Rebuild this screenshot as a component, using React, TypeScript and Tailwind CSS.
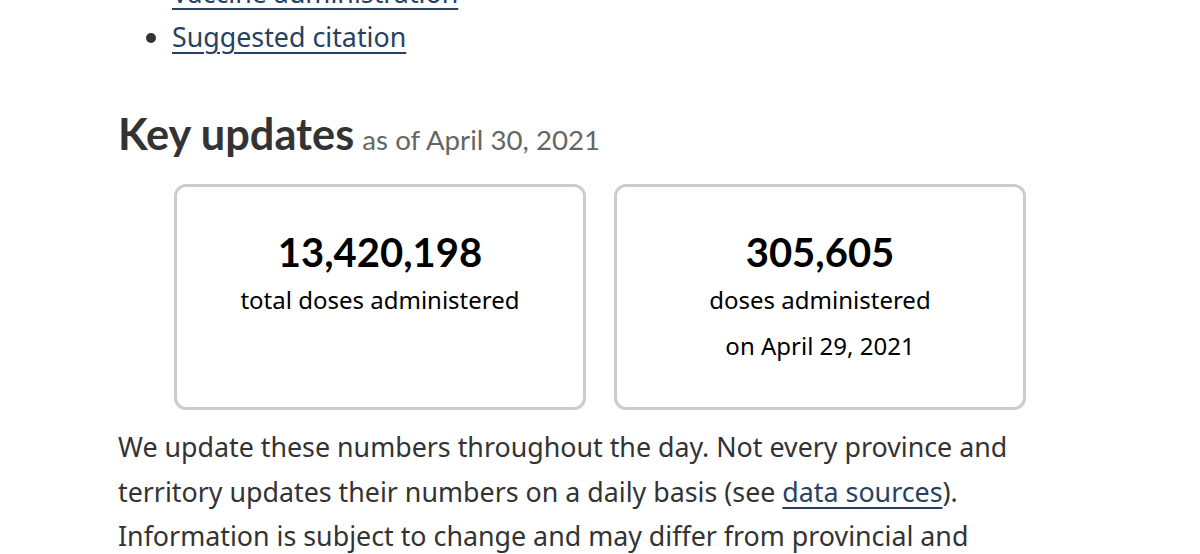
import React from "react";

export default function App() {
  return (
    <div className="w-[1200px] h-[554px] overflow-hidden bg-white relative">
      <div className="absolute left-0 top-[-29px] w-full">
        <div className="pl-[118px] pr-[150px]" style={{ fontFamily: "'Noto Sans', sans-serif" }}>
          <ul className="list-disc pl-[54px] text-[#333] text-[26.8px] leading-[44px]">
            <li>
              <a className="text-[#284162] underline underline-offset-[5px] decoration-[2px]">Vaccine administration</a>
            </li>
            <li>
              <a className="text-[#284162] underline underline-offset-[5px] decoration-[2px]">Suggested citation</a>
            </li>
          </ul>
          <h2 className="mt-[44px] text-[#333] leading-[60px]" style={{ fontFamily: "Lato, sans-serif" }}>
            <span className="text-[43.3px] font-bold">Key updates</span>{" "}
            <span className="ml-[4px] text-[27.7px] text-[#666]">as of April 30, 2021</span>
          </h2>
          <div className="flex gap-[28px] pl-[56px] mt-[10px]">
            <div className="w-[412px] h-[226px] border-[3px] border-[#cccccc] rounded-[12px] flex flex-col items-center pt-[40px]">
              <div className="text-[40px] font-bold leading-[50px] text-black" style={{ fontFamily: "Lato, sans-serif" }}>13,420,198</div>
              <div className="text-[24px] leading-[46px] text-black">total doses administered</div>
            </div>
            <div className="w-[412px] h-[226px] border-[3px] border-[#cccccc] rounded-[12px] flex flex-col items-center pt-[40px]">
              <div className="text-[40px] font-bold leading-[50px] text-black" style={{ fontFamily: "Lato, sans-serif" }}>305,605</div>
              <div className="text-[24px] leading-[46px] text-black">doses administered</div>
              <div className="text-[24px] leading-[46px] text-black">on April 29, 2021</div>
            </div>
          </div>
          <p className="mt-[15px] text-[26.8px] leading-[44.5px] text-[#333] w-[920px]">
            We update these numbers throughout the day. Not every province and territory updates their numbers on a daily basis (see{" "}
            <a className="text-[#284162] underline underline-offset-[5px] decoration-[2px]">data sources</a>). Information is subject to change and may differ from provincial and territorial data.
          </p>
        </div>
      </div>
    </div>
  );
}
